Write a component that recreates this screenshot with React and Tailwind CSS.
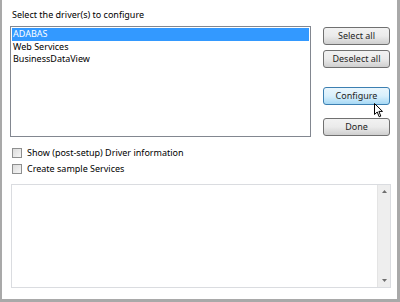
import React from 'react';

const Btn = ({ children, hot, className = '' }) => (
  <div
    className={`h-[18px] w-[67px] rounded-[3px] border flex items-center justify-center text-[#1e1e1e] ${className} ${
      hot
        ? 'border-[#3c7fb1] bg-gradient-to-b from-[#eaf6fd] via-[#d9f0fc] to-[#a7d9f5]'
        : 'border-[#707070] bg-gradient-to-b from-[#f2f2f2] via-[#ebebeb] to-[#cfcfcf]'
    }`}
  >
    {children}
  </div>
);

const Check = ({ label }) => (
  <div className="flex items-center h-[16px]">
    <div className="w-[10px] h-[10px] border border-[#8e8f8f] bg-gradient-to-br from-[#dcdcdc] to-[#f6f6f6] mr-[5px]" />
    <span>{label}</span>
  </div>
);

export default function App() {
  return (
    <div
      className="w-[400px] h-[302px] bg-white border-l-2 border-r-[3px] border-b-[3px] border-[#a9a9a9] text-[9px] text-black"
      style={{ fontFamily: '"Noto Sans", "Open Sans", sans-serif' }}
    >
      <div className="pl-[10px] pt-[9px] leading-[12px]">Select the driver(s) to configure</div>

      <div className="flex pl-[8px] pt-[5px]">
        <div className="w-[301px] h-[111px] border border-[#828790] p-[1px] leading-[12.5px]">
          <div className="bg-[#3399ff] text-white pl-[1px]">ADABAS</div>
          <div className="pl-[1px]">Web Services</div>
          <div className="pl-[1px]">BusinessDataView</div>
        </div>
        <div className="ml-[12px] mt-[1px] flex flex-col">
          <Btn>Select all</Btn>
          <Btn className="mt-[5px]">Deselect all</Btn>
          <div className="relative mt-[19px]">
            <Btn hot>Configure</Btn>
            <svg className="absolute left-[51px] top-[16px]" width="10" height="15" viewBox="0 0 10 15">
              <path d="M0.5 0.5 L0.5 11.5 L3.2 9 L5.2 13.8 L6.8 13.1 L4.9 8.4 L8.5 8.4 Z" fill="white" stroke="black" strokeWidth="1" strokeLinejoin="round" />
            </svg>
          </div>
          <Btn className="mt-[13px]">Done</Btn>
        </div>
      </div>

      <div className="pl-[10px] pt-[8px]">
        <Check label="Show (post-setup) Driver information" />
        <Check label="Create sample Services" />
      </div>

      <div className="ml-[9px] mt-[7px] w-[380px] h-[104px] border border-[#dadce0] flex">
        <div className="flex-1" />
        <div className="w-[13px] bg-[#eeeeee] border-l border-[#e4e4e4] flex flex-col justify-between items-center py-[5px]">
          <svg width="5" height="3" viewBox="0 0 5 3"><path d="M2.5 0 L5 3 L0 3 Z" fill="#6e6e6e" /></svg>
          <svg width="5" height="3" viewBox="0 0 5 3"><path d="M0 0 L5 0 L2.5 3 Z" fill="#6e6e6e" /></svg>
        </div>
      </div>
    </div>
  );
}
